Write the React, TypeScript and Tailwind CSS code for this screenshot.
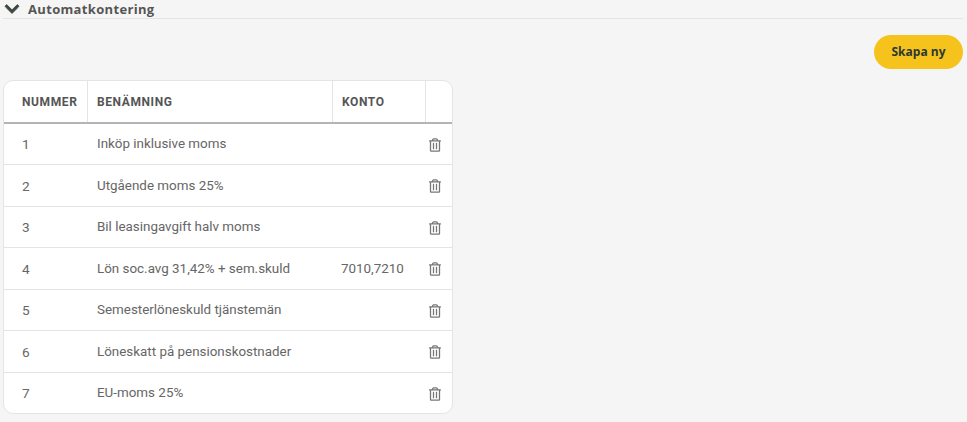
import { FaChevronDown, FaRegTrashAlt } from "react-icons/fa";

const rows: [string, string, string][] = [
  ["1", "Inköp inklusive moms", ""],
  ["2", "Utgående moms 25%", ""],
  ["3", "Bil leasingavgift halv moms", ""],
  ["4", "Lön soc.avg 31,42% + sem.skuld", "7010,7210"],
  ["5", "Semesterlöneskuld tjänstemän", ""],
  ["6", "Löneskatt på pensionskostnader", ""],
  ["7", "EU-moms 25%", ""],
];

export default function App() {
  return (
    <div className="w-[967px] h-[422px] overflow-hidden bg-[#f5f5f5] font-['Roboto',sans-serif] text-[#555555]">
      <div className="mx-[3px] w-[960px] h-[19px] border-b border-[#e4e4e4] flex items-center pb-[1px]">
        <FaChevronDown className="ml-[1px] w-[16px] h-[16px] text-[#3d4a40] stroke-[#3d4a40] stroke-[30px]" />
        <span className="ml-[8px] text-[13px] font-bold tracking-[0.33px] leading-[16px] text-[#555555] font-['Open_Sans',sans-serif]">Automatkontering</span>
      </div>
      <div className="flex justify-end mt-[16px] pr-[4px]">
        <button className="w-[89px] h-[34px] rounded-full bg-[#f6c31c] text-[12px] font-bold text-[#2b3a33] font-['Open_Sans',sans-serif]">Skapa ny</button>
      </div>
      <div className="mt-[11px] ml-[3px] w-[450px] h-[334px] rounded-[10px] border border-[#e4e4e4] bg-white overflow-hidden">
        <div className="flex h-[43px] border-b-2 border-[#b4b4b4] text-[12px] font-bold tracking-[0.6px]">
          <div className="w-[84px] border-r border-[#e4e4e4] pl-[18px] flex items-center">NUMMER</div>
          <div className="w-[245px] border-r border-[#e4e4e4] pl-[9px] flex items-center">BENÄMNING</div>
          <div className="w-[93px] border-r border-[#e4e4e4] pl-[9px] flex items-center">KONTO</div>
          <div className="flex-1" />
        </div>
        <div className="grid grid-rows-[41px_42px_41px_42px_41px_42px_40px] h-[289px] text-[13.4px] text-[#666666]">
          {rows.map(([n, name, konto], i) => (
            <div key={n} className={`flex items-center pt-[1px] ${i < 6 ? "border-b border-[#e4e4e4]" : ""}`}>
              <div className="w-[84px] pl-[18px] text-[13.6px]">{n}</div>
              <div className="w-[245px] pl-[9px]">{name}</div>
              <div className="w-[93px] pl-[8px]">{konto}</div>
              <div className="flex-1 flex pl-[3px]">
                <FaRegTrashAlt className="w-[12px] h-[14px] text-[#777777]" />
              </div>
            </div>
          ))}
        </div>
      </div>
    </div>
  );
}
